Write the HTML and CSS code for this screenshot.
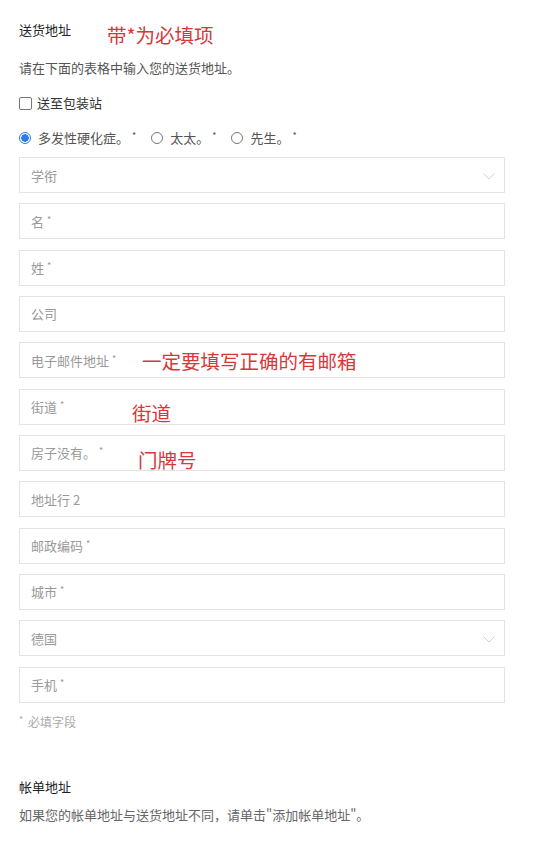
FILE: index.html
```html
<!DOCTYPE html>
<html lang="zh">
<head>
  <meta charset="UTF-8">
  <meta name="viewport" content="width=device-width, initial-scale=1.0">
  <title>送货地址</title>
  <link rel="stylesheet" href="styles.css">
</head>
<body>
  <!-- 送货地址 -->
  <section class="shipping">
    <div class="title-row">
      <h2 class="title">送货地址</h2>
      <span class="note note-title">带*为必填项</span>
    </div>
    <p class="intro">请在下面的表格中输入您的送货地址。</p>

    <label class="check-row">
      <span class="checkbox"></span>
      送至包装站
    </label>

    <div class="radio-row">
      <label class="radio-item"><span class="radio checked"></span>多发性硬化症。<sup>*</sup></label>
      <label class="radio-item"><span class="radio"></span>太太。<sup>*</sup></label>
      <label class="radio-item"><span class="radio"></span>先生。<sup>*</sup></label>
    </div>

    <div class="fields">
      <div class="field select">学衔
        <svg class="chevron" width="12" height="7" viewBox="0 0 12 7"><path d="M0.5 0.5 L6 6 L11.5 0.5" fill="none" stroke="#d0d0d0" stroke-width="1"/></svg>
      </div>
      <div class="field">名 <sup>*</sup></div>
      <div class="field">姓 <sup>*</sup></div>
      <div class="field">公司</div>
      <div class="field">电子邮件地址 <sup>*</sup>
        <span class="note note-email">一定要填写正确的有邮箱</span>
      </div>
      <div class="field">街道 <sup>*</sup>
        <span class="note note-street">街道</span>
      </div>
      <div class="field">房子没有。 <sup>*</sup>
        <span class="note note-house">门牌号</span>
      </div>
      <div class="field">地址行 2</div>
      <div class="field">邮政编码 <sup>*</sup></div>
      <div class="field">城市 <sup>*</sup></div>
      <div class="field select">德国
        <svg class="chevron" width="12" height="7" viewBox="0 0 12 7"><path d="M0.5 0.5 L6 6 L11.5 0.5" fill="none" stroke="#d0d0d0" stroke-width="1"/></svg>
      </div>
      <div class="field">手机 <sup>*</sup></div>
    </div>

    <p class="required-hint"><sup>*</sup> 必填字段</p>
  </section>

  <!-- 帐单地址 -->
  <section class="billing">
    <h2 class="title">帐单地址</h2>
    <p class="billing-text">如果您的帐单地址与送货地址不同，请单击"添加帐单地址"。</p>
  </section>
</body>
</html>
```

FILE: styles.css
```css
/* Общие стили */
body {
  margin: 0;
  padding: 0;
  background: #fff;
  font-family: "Noto Sans CJK SC", "Noto Sans", sans-serif;
  font-size: 13px;
  color: #333;
}

p, h2 {
  margin: 0;
}

sup {
  font-size: 9px;
  vertical-align: top;
  position: relative;
  top: -2px;
  margin-left: 3px;
}

.shipping,
.billing {
  padding: 0 19px;
  width: 486px;
}

.shipping {
  padding-top: 20px;
}

/* заголовок */
.title-row {
  position: relative;
  height: 20px;
}

.title {
  font-size: 13px;
  font-weight: normal;
  line-height: 20px;
  color: #222;
}

/* красные пометки */
.note {
  position: absolute;
  color: #d9363a;
  font-size: 19.5px;
  line-height: 24px;
  white-space: nowrap;
}

.note-title {
  left: 88px;
  top: 3px;
}

.note-email {
  left: 122px;
  top: 6px;
}

.note-street {
  left: 112px;
  top: 11px;
}

.note-house {
  left: 118px;
  top: 12px;
}

.intro {
  margin-top: 18px;
  line-height: 20px;
  color: #555;
}

/* чекбокс */
.check-row {
  display: flex;
  align-items: center;
  gap: 5px;
  margin-top: 15px;
  line-height: 20px;
  color: #333;
}

.checkbox {
  width: 11px;
  height: 11px;
  border: 1px solid #777;
  border-radius: 2px;
}

/* радио */
.radio-row {
  display: flex;
  gap: 15px;
  margin-top: 15px;
  line-height: 20px;
  color: #555;
}

.radio-item {
  display: flex;
  align-items: center;
}

.radio {
  box-sizing: border-box;
  width: 12px;
  height: 12px;
  border: 1px solid #777;
  border-radius: 50%;
  margin-right: 7px;
}

.radio.checked {
  border-color: #2b7de9;
  background: radial-gradient(circle, #2b7de9 0 3.5px, #fff 4px);
}

/* поля */
.fields {
  display: flex;
  flex-direction: column;
  gap: 10.33px;
  margin-top: 9px;
}

.field {
  position: relative;
  box-sizing: border-box;
  height: 36px;
  border: 1px solid #e4e4e4;
  padding: 0 11px;
  display: flex;
  align-items: center;
  color: #999;
  font-size: 13px;
}

.field sup {
  color: #999;
}

.chevron {
  position: absolute;
  right: 9px;
  top: 15px;
}

.required-hint {
  margin-top: 9px;
  line-height: 20px;
  color: #aaa;
  font-size: 12px;
}

.required-hint sup {
  margin-left: 0;
  margin-right: 2px;
}

/*帐单地址 */
.billing {
  padding-top: 45px;
}

.billing-text {
  margin-top: 8px;
  line-height: 20px;
  color: #666;
}
```
